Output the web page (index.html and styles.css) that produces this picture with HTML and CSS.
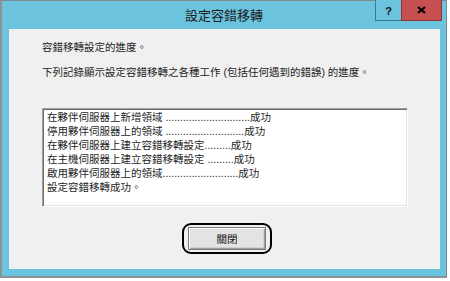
FILE: index.html
```html
<!DOCTYPE html>
<html lang="zh-Hant">
<head>
    <meta charset="UTF-8">
    <title>設定容錯移轉</title>
    <link rel="stylesheet" href="styles.css">
</head>
<body>
    <!-- Dialog window -->
    <div class="window">
        <div class="titlebar">
            <span class="title">設定容錯移轉</span>
            <div class="caption-buttons">
                <button class="cap-btn help">?</button>
                <button class="cap-btn close">
                    <svg width="9" height="8" viewBox="0 0 9 8">
                        <path d="M1 1 L8 7 M8 1 L1 7" stroke="#000" stroke-width="2.2" fill="none"/>
                    </svg>
                </button>
            </div>
        </div>

        <div class="client">
            <p class="line first">容錯移轉設定的進度。</p>
            <p class="line">下列記錄顯示設定容錯移轉之各種工作 (包括任何遇到的錯誤) 的進度。</p>

            <div class="log">
                <div class="log-row">在夥伴伺服器上新增領域 .............................成功</div>
                <div class="log-row">停用夥伴伺服器上的領域 ...........................成功</div>
                <div class="log-row">在夥伴伺服器上建立容錯移轉設定.........成功</div>
                <div class="log-row">在主機伺服器上建立容錯移轉設定 .........成功</div>
                <div class="log-row">啟用夥伴伺服器上的領域..........................成功</div>
                <div class="log-row">設定容錯移轉成功。</div>
            </div>

            <div class="actions">
                <div class="focus-ring">
                    <button class="btn">關閉</button>
                </div>
            </div>
        </div>
    </div>
</body>
</html>
```

FILE: styles.css
```css
* {
    margin: 0;
    padding: 0;
    box-sizing: border-box;
    font-family: "Liberation Sans", "Noto Sans CJK TC", sans-serif;
}

body {
    background: #ffffff;
    width: 450px;
    height: 281px;
    overflow: hidden;
}

/* Window frame */
.window {
    width: 447px;
    height: 278px;
    background: #6bc3de;
    border: 1px solid #7d8a8f;
    border-left: 2px solid #8a9397;
    border-bottom: 2px solid #8a9397;
    padding: 0 6px 7px 7px;
}

/* Title bar */
.titlebar {
    height: 28px;
    margin: 0 -6px 0 -7px;
    display: grid;
    grid-template-columns: 1fr auto 1fr;
}

.title {
    grid-column: 2;
    align-self: center;
    font-size: 13px;
    line-height: 16px;
    color: #1c1c1c;
    padding-top: 1px;
}

.caption-buttons {
    grid-column: 3;
    justify-self: end;
    align-self: start;
    display: flex;
    margin-right: 4px;
    margin-top: -1px;
}

.cap-btn {
    height: 21px;
    border: 1px solid rgba(20, 60, 75, 0.55);
    border-top: none;
    display: flex;
    align-items: center;
    justify-content: center;
    cursor: default;
}

.help {
    width: 26px;
    background: #6bc3de;
    border-right: none;
    font-size: 11px;
    font-weight: bold;
    color: #111;
    padding-top: 1px;
}

.close {
    width: 41px;
    background: #c75050;
    border-color: #8c3434;
}

/* Client area */
.client {
    height: 240px;
    background: #f0f0f0;
    padding: 11px 0 0 33px;
    color: #1e1e1e;
    font-size: 10.5px;
}

.line {
    line-height: 14px;
    white-space: nowrap;
}

.line + .line {
    margin-top: 11px;
}

/* Log box */
.log {
    margin-top: 29px;
    width: 366px;
    height: 99px;
    background: #ffffff;
    border: 1px solid;
    border-color: #a0a0a0 #ffffff #ffffff #a0a0a0;
    box-shadow: inset 1px 1px 0 #6d6d6d, inset -1px -1px 0 #e3e3e3;
    padding: 1px 0 0 4px;
}

.log-row {
    line-height: 14px;
    white-space: nowrap;
}

/* Bottom button */
.actions {
    display: flex;
    justify-content: center;
    margin-top: 16px;
    padding-right: 28px;
}

.focus-ring {
    border: 2px solid #000;
    border-radius: 9px;
    padding: 2px 4px;
}

.btn {
    width: 78px;
    height: 23px;
    background: #e3e3e3;
    border: 1px solid #7a7a7a;
    box-shadow: inset 1px 1px 0 #ffffff, inset -1px -1px 0 #a0a0a0, inset -2px -2px 0 #d0d0d0;
    font-size: 10.5px;
    color: #111;
    cursor: pointer;
}
```
